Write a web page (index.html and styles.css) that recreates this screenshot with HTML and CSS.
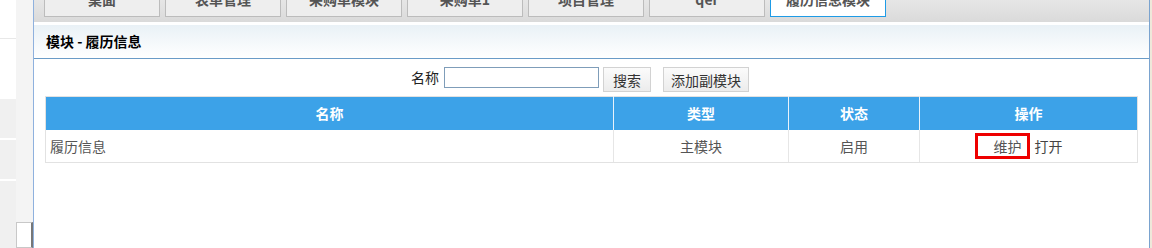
FILE: index.html
```html
<!DOCTYPE html>
<html lang="zh-CN">
<head>
  <meta charset="UTF-8" />
  <title>模块 - 履历信息</title>
  <link rel="stylesheet" href="styles.css">
</head>
<body>
  <div class="side">
    <div class="side-top"></div>
    <div class="side-item"></div>
    <div class="side-item"></div>
    <div class="side-item last"></div>
  </div>
  <div class="strip">
    <div class="strip-box"></div>
  </div>
  <div class="main">
    <div class="tabbar">
      <div class="tab">桌面</div>
      <div class="tab">表单管理</div>
      <div class="tab">采购单模块</div>
      <div class="tab">采购单1</div>
      <div class="tab">项目管理</div>
      <div class="tab">qer</div>
      <div class="tab active">履历信息模块</div>
    </div>
    <div class="panel-title">模块 - 履历信息</div>
    <div class="panel-body">
      <div class="search">
        <label>名称</label>
        <input type="text" class="field" />
        <button class="btn">搜索</button>
        <button class="btn wide">添加副模块</button>
      </div>
      <table class="grid">
        <thead>
          <tr>
            <th class="c1">名称</th>
            <th class="c2">类型</th>
            <th class="c3">状态</th>
            <th class="c4">操作</th>
          </tr>
        </thead>
        <tbody>
          <tr>
            <td class="left">履历信息</td>
            <td>主模块</td>
            <td>启用</td>
            <td class="ops"><span class="mark">维护</span><a class="op">打开</a></td>
          </tr>
        </tbody>
      </table>
    </div>
  </div>
  <div class="edge"></div>
</body>
</html>
```

FILE: styles.css
```css
* { box-sizing: border-box; }
html, body {
  margin: 0;
  padding: 0;
  width: 1152px;
  height: 248px;
  overflow: hidden;
  background: #fff;
  font-family: "Noto Sans CJK SC", "Liberation Sans", sans-serif;
  font-size: 14px;
}
body {
  display: flex;
}
.side {
  width: 16px;
  display: flex;
  flex-direction: column;
}
.side-top {
  height: 99px;
  border-top: 38px solid #fff;
  box-shadow: inset 0 1px 0 #e8e8e8;
}
.side-item {
  height: 41px;
  background: #f0f0f0;
  border-bottom: 2px solid #fff;
}
.side-item.last {
  flex-grow: 1;
  border-bottom: none;
}
.strip {
  width: 17px;
  background: #f4f4f4;
  display: flex;
  flex-direction: column;
  justify-content: flex-end;
}
.strip-box {
  height: 26px;
  background: #fff;
  border: 1px solid #c8c8c8;
  border-right: 2px solid #777;
}
.main {
  width: 1117px;
  border-left: 1px solid #8fb1de;
  border-right: 1px solid #7aa3cf;
  display: flex;
  flex-direction: column;
}
.edge {
  width: 2px;
  background: #efe8da;
}
.tabbar {
  height: 22px;
  background: linear-gradient(#e6e6e6, #dadada);
  padding-left: 10px;
  display: flex;
  gap: 5px;
  overflow: hidden;
  margin-bottom: 3px;
}
.tab {
  width: 116px;
  height: 30px;
  margin-top: -13px;
  background: #eee;
  border: 1px solid #bcbcbc;
  color: #555;
  font-weight: bold;
  text-align: center;
  line-height: 22px;
}
.tab.active {
  background: #fff;
  border: 1px solid #1e9be6;
}
.panel-title {
  height: 34px;
  background: linear-gradient(#e9f1f6, #fff);
  border-bottom: 1px solid #6a9bc7;
  padding-left: 12px;
  line-height: 33px;
  font-weight: bold;
  color: #000;
}
.panel-body {
  padding: 8px 10px 0 11px;
}
.search {
  display: flex;
  justify-content: center;
  align-items: flex-start;
  padding-right: 24px;
  height: 29px;
}
.search label {
  color: #222;
  line-height: 21px;
  margin-right: 5px;
}
.field {
  width: 155px;
  height: 21px;
  border: 1px solid #7f9db9;
  margin: 0 4px 0 0;
}
.btn {
  width: 48px;
  height: 25px;
  border: 1px solid #d2d2d2;
  background: linear-gradient(#fbfbfb, #ececec);
  color: #333;
  font-family: inherit;
  font-size: 14px;
  padding: 0;
  margin: 0 12px 0 0;
}
.btn.wide {
  width: 86px;
  margin: 0;
}
.grid {
  width: 1093px;
  border-collapse: collapse;
  border: 1px solid #e2e2e2;
}
.grid th {
  height: 33px;
  background: #3ca2e8;
  color: #fff;
  font-weight: bold;
  border-left: 1px solid #e8f2fb;
  padding: 0;
}
.grid th:first-child { border-left: none; }
.c1 { width: 568px; }
.c2 { width: 175px; }
.c3 { width: 131px; }
.grid td {
  height: 33px;
  color: #555;
  text-align: center;
  border-left: 1px solid #e6e6e6;
  border-bottom: 1px solid #e2e2e2;
  padding: 0;
}
.grid td.left {
  text-align: left;
  padding-left: 4px;
  border-left: none;
}
.grid td.ops {
  padding-right: 20px;
}
.mark {
  display: inline-block;
  border: 3px solid #e00;
  padding: 0 5px 0 16px;
  line-height: 20px;
}
.op {
  margin-left: 5px;
  color: #444;
}
```
